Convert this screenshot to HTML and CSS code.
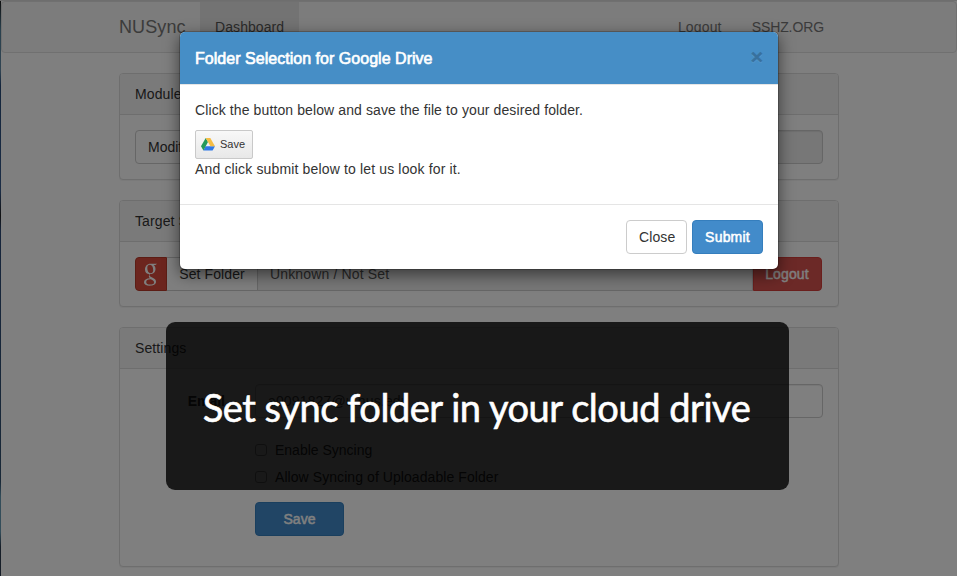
FILE: index.html
```html
<!DOCTYPE html>
<html lang="en">
<head>
<meta charset="utf-8">
<title>NUSync</title>
<link rel="stylesheet" href="styles.css">
</head>
<body>
<div class="page">
  <nav class="navbar">
    <div class="container nav-row">
      <span class="brand">NUSync</span>
      <a class="nav-link active">Dashboard</a>
      <span class="spacer"></span>
      <a class="nav-link logout">Logout</a>
      <a class="nav-link domain">SSHZ.ORG</a>
    </div>
  </nav>
  <main class="container">
    <section class="panel">
      <h3 class="panel-heading">Module</h3>
      <div class="panel-body">
        <div class="group">
          <button class="btn group-first">Modify</button>
          <div class="input disabled group-last"></div>
        </div>
      </div>
    </section>
    <section class="panel">
      <h3 class="panel-heading">Target Storage</h3>
      <div class="panel-body">
        <div class="group storage">
          <span class="google"><svg width="16" height="23" viewBox="0 0 16 23"><path fill="#fff" fill-rule="evenodd" d="M7.500 .8H14l-1.600 1.300h-1.800c1.300 1 1.900 2.300 1.900 3.900 0 3.100-2.200 5-5.200 5.100-1.300 1-1.200 1.900.4 2.700l2.400 1.300c1.900 1 2.900 2 2.900 3.700 0 2.500-2.600 3.900-6.400 3.900C3 22.700 1 21.400 1 19.200c0-2.400 2.300-3.700 6-3.900-1.300-1.200-1.500-2.500-.6-4.100C3.700 11.200 2 9.300 2 6.500 2 3.200 4.300.8 7.500.8zM6.900 1.800C5.200 1.800 4.300 3 4.300 5c0 3 1.200 5.200 3.300 5.200 1.600 0 2.600-1.100 2.600-3 0-3-1.200-5.400-3.300-5.400zM7.800 16.300c-2.900-.1-4.600.8-4.600 2.600 0 1.700 1.500 2.700 4 2.700s3.900-.8 3.900-2.200c0-1.300-1-1.800-3.300-3.100z"/></svg></span>
          <button class="btn set-folder">Set Folder</button>
          <div class="input disabled">Unknown / Not Set</div>
          <button class="btn danger group-last">Logout</button>
        </div>
      </div>
    </section>
    <section class="panel">
      <h3 class="panel-heading">Settings</h3>
      <div class="panel-body form">
        <label class="form-label">Email</label>
        <div class="input">a0091827@u.nus.edu</div>
        <div class="checks">
          <label class="check"><i class="box"></i>Enable Syncing</label>
          <label class="check wide"><i class="box"></i>Allow Syncing of Uploadable Folder</label>
        </div>
        <button class="btn primary save">Save</button>
      </div>
    </section>
  </main>
</div>
<div class="backdrop">
  <div class="modal">
    <header class="modal-header">
      <h4 class="modal-title">Folder Selection for Google Drive</h4>
      <span class="close">×</span>
    </header>
    <div class="modal-body">
      <p class="lead">Click the button below and save the file to your desired folder.</p>
      <button class="drive-save">
        <svg width="14" height="13" viewBox="0 0 14 13">
          <path fill="#2f78e8" d="M4.500 8.300H14l-2.400 4.100H2.400z"/>
          <path fill="#24995a" d="M4.700 0 7 4 2.400 12.400 0 8.300z"/>
          <path fill="#f6bd45" d="M4.700 0h4.600L14 8.300H9.400z"/>
        </svg><span class="drive-label">Save</span>
      </button>
      <p class="follow">And click submit below to let us look for it.</p>
    </div>
    <footer class="modal-footer">
      <button class="btn">Close</button>
      <button class="btn primary submit">Submit</button>
    </footer>
  </div>
</div>
<div class="caption"><span class="caption-text">Set sync folder in your cloud drive</span></div>
</body>
</html>
```
FILE: styles.css
```css
* { box-sizing: border-box; }
html { height: 100%; overflow: hidden; background: #808080; }
body {
  margin: 0;
  height: 576px;
  overflow: hidden;
  font: 14px/20px "Liberation Sans", Arial, sans-serif;
  color: #333;
  background: #dcdcdc;
}
h3, h4, p { margin: 0; font-weight: normal; }
.page {
  height: 576px;
  margin-top: 1px;
  border-left: 1px solid;
  border-image: linear-gradient(#1a1a1a 0, #54829c 30px, #638aa6 70px, #284b78 85px, #375a8c 190px, #222 215px, #2d4b78 230px, #32506e 480px, #669ab4 495px, #669ab4 530px, #2d3c50 545px) 1;
  background: #fff;
}
.navbar {
  height: 52px;
  margin-bottom: 20px;
  border: 1px solid #e0e0e0;
  border-radius: 4px;
  background: #f8f8f8;
}
.container { width: 720px; margin-left: 118px; }
.navbar .container { margin-left: 117px; }
.nav-row { display: flex; }
.brand { width: 81px; font-size: 18px; line-height: 20px; padding-top: 15px; color: #777; white-space: nowrap; letter-spacing: .1px; }
.nav-link { padding: 15px; color: #777; }
.nav-link.logout { letter-spacing: .15px; }
.nav-link.domain { letter-spacing: -.1px; }
.nav-link.active { width: 99px; letter-spacing: .08px; background: #e7e7e7; color: #555; }
.spacer { flex: 1; }
.panel {
  margin-bottom: 20px;
  border: 1px solid #ddd;
  border-radius: 4px;
  background: #fff;
  box-shadow: 0 1px 1px rgba(0,0,0,.05);
}
.panel-heading { padding: 10px 15px; height: 41px; font-size: 14px; background: #f5f5f5; border-bottom: 1px solid #ddd; border-radius: 3px 3px 0 0; letter-spacing: .1px; }
.panel-body { padding: 15px; }
.group { display: flex; }
.storage { width: 687px; }
.btn {
  height: 34px;
  padding: 6px 12px;
  border: 1px solid #ccc;
  border-radius: 4px;
  background: #fff;
  color: #333;
  font: inherit;
  white-space: nowrap;
}
.input {
  flex: 1;
  height: 34px;
  padding: 6px 12px;
  border: 1px solid #ccc;
  border-radius: 4px;
  color: #555;
  letter-spacing: .15px;
  box-shadow: inset 0 1px 1px rgba(0,0,0,.075);
}
.group .input, .group .btn { border-radius: 0; }
.group .group-first { border-radius: 4px 0 0 4px; }
.group .group-last { border-radius: 0 4px 4px 0; }
.input.disabled { background: #eee; }
.set-folder { width: 90px; border-left: 0; border-right: 0; letter-spacing: .1px; }
.google {
  display: flex;
  align-items: center;
  justify-content: center;
  width: 32px;
  height: 34px;
  border: 1px solid #b83a2b;
  border-radius: 4px 0 0 4px;
  background: #d94b3c;
}
.primary { background: #428bca; border-color: #357ebd; color: #fff; -webkit-text-stroke: .5px #fff; }
.group .danger { width: 69px; padding-left: 11px; background: #d9534f; border-color: #d43f3a; color: #fff; -webkit-text-stroke: .4px #fff; letter-spacing: .15px; }
.form { display: grid; grid-template-columns: 90px 568px; column-gap: 30px; height: 197px; align-content: start; }
.form-label { padding-top: 7px; text-align: right; font-weight: bold; }
.checks { grid-column: 2; margin-top: 22px; }
.check { display: flex; align-items: center; height: 20px; margin-bottom: 7px; }
.check.wide { letter-spacing: .07px; }
.box { width: 12px; height: 12px; margin-right: 8px; border: 1px solid #999; border-radius: 3px; background: #f8f8f8; }
.save { grid-column: 2; width: 89px; margin-top: 8px; }
.backdrop { position: absolute; inset: 0; padding: 31px 0 0 179px; background: rgba(0,0,0,.5); }
.modal {
  width: 600px;
  height: 239px;
  border: 1px solid rgba(0,0,0,.2);
  border-radius: 6px;
  background: #fff;
  background-clip: padding-box;
  box-shadow: 0 5px 15px rgba(0,0,0,.5);
}
.modal-header {
  display: flex;
  justify-content: space-between;
  height: 53px;
  padding: 16px 15px;
  border-bottom: 1px solid #e5e5e5;
  border-radius: 5px 5px 0 0;
  background: #468ec6;
}
.modal-title { font-size: 16px; line-height: 22px; color: #fff; -webkit-text-stroke: .65px #fff; letter-spacing: .03px; }
.close { color: #38719e; font-size: 21px; line-height: 18px; font-weight: bold; text-shadow: 0 1px 0 #5aa0d5; -webkit-text-stroke: .4px #38719e; }
.modal-body { height: 119px; padding: 15px; }
.lead { margin-bottom: 10px; letter-spacing: .105px; }
.follow { letter-spacing: .15px; }
.drive-save {
  display: flex;
  align-items: center;
  gap: 5px;
  width: 58px;
  height: 29px;
  padding: 0 5px;
  border: 1px solid #c9c9c9;
  border-radius: 2px;
  background: linear-gradient(#f8f8f8, #e8e8e8);
  color: #333;
  font: 11px "Liberation Sans", Arial, sans-serif;
}
.drive-label { padding-bottom: 1px; }
.modal-footer { display: flex; justify-content: flex-end; gap: 5px; padding: 15px; border-top: 1px solid #e5e5e5; }
.modal-footer .btn { width: 61px; letter-spacing: .1px; }
.modal-footer .submit { width: 71px; letter-spacing: .2px; }
.caption {
  position: absolute;
  left: 166px;
  top: 322px;
  width: 623px;
  height: 168px;
  padding: 1px 2px 0 0;
  border-radius: 9px;
  background: rgba(0,0,0,.8);
  display: flex;
  align-items: center;
  justify-content: center;
}
.caption-text { color: #fff; font: 38px/48px Lato, "Open Sans", sans-serif; letter-spacing: -.46px; -webkit-text-stroke: .6px #fff; white-space: nowrap; }
```
